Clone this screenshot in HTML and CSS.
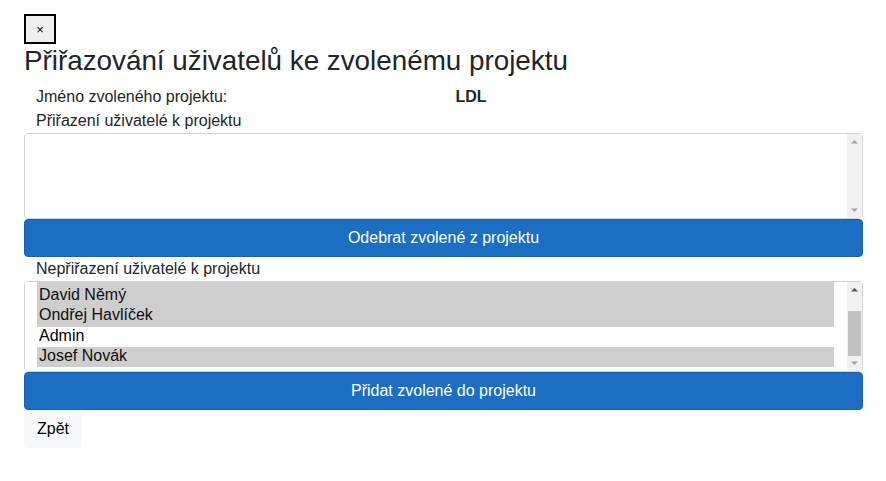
FILE: index.html
```html
<!DOCTYPE html>
<html lang="cs">
<head>
<meta charset="utf-8">
<title>Přiřazování uživatelů</title>
<link rel="stylesheet" href="styles.css">
</head>
<body>
<main class="page">
  <button class="close-btn" type="button">×</button>
  <h3 class="title">Přiřazování uživatelů ke zvolenému projektu</h3>
  <div class="row">
    <div class="col">Jméno zvoleného projektu:</div>
    <div class="col col-bold">LDL</div>
  </div>
  <div class="row">
    <div class="col">Přiřazení uživatelé k projektu</div>
  </div>
  <div class="listbox-wrap">
    <select class="listbox listbox-assigned" multiple></select>
    <div class="scrollbar" aria-hidden="true">
      <div class="sb-btn"><svg width="15" height="15" viewBox="0 0 15 15"><polygon class="arrow-off" points="4,9.5 11,9.5 7.5,6"/></svg></div>
      <div class="sb-track"></div>
      <div class="sb-btn"><svg width="15" height="15" viewBox="0 0 15 15"><polygon class="arrow-off" points="4,5.5 11,5.5 7.5,9"/></svg></div>
    </div>
  </div>
  <button class="btn btn-primary" type="button">Odebrat zvolené z projektu</button>
  <div class="row">
    <div class="col">Nepřiřazení uživatelé k projektu</div>
  </div>
  <div class="listbox-wrap">
    <select id="unassigned" class="listbox listbox-unassigned" multiple>
      <option selected>Andrea Nováková</option>
      <option selected>David Němý</option>
      <option selected>Ondřej Havlíček</option>
      <option>Admin</option>
      <option selected>Josef Novák</option>
    </select>
    <div class="scrollbar" aria-hidden="true">
      <div class="sb-btn"><svg width="15" height="15" viewBox="0 0 15 15"><polygon class="arrow-on" points="4,9.5 11,9.5 7.5,6"/></svg></div>
      <div class="sb-track sb-track-end"><div class="sb-thumb"></div></div>
      <div class="sb-btn"><svg width="15" height="15" viewBox="0 0 15 15"><polygon class="arrow-off" points="4,5.5 11,5.5 7.5,9"/></svg></div>
    </div>
  </div>
  <button class="btn btn-primary" type="button">Přidat zvolené do projektu</button>
  <div class="actions">
    <button class="btn btn-light" type="button">Zpět</button>
  </div>
</main>
<script src="script.js"></script>
</body>
</html>
```

FILE: styles.css
```css
html, body {
  margin: 0;
  padding: 0;
  background: #fff;
}
body {
  font-family: "Liberation Sans", Arial, Helvetica, sans-serif;
  font-size: 16px;
  line-height: 1.5;
  color: #212529;
}
.page {
  display: flex;
  flex-direction: column;
  align-items: stretch;
  padding: 14px 23px 0 24px;
}
.close-btn {
  align-self: flex-start;
  width: 32px;
  height: 30px;
  padding: 0;
  margin: 0;
  border: 2px solid #000;
  background: #efefef;
  font-family: "Liberation Sans", Arial, sans-serif;
  font-size: 13px;
  line-height: 1;
  color: #000;
}
.title {
  margin: 0 0 7px 0;
  font-size: 27.8px;
  font-weight: 400;
  line-height: 34px;
  color: #212529;
}
.row {
  display: flex;
}
.col {
  flex: 0 0 50%;
  box-sizing: border-box;
  padding: 0 12px;
}
.col-bold {
  font-weight: 700;
}
.listbox-wrap {
  position: relative;
}
.listbox {
  display: block;
  box-sizing: border-box;
  width: 100%;
  margin: 0;
  padding: 6px 28px 6px 12px;
  border: 1px solid #ced4da;
  border-radius: 4px;
  background: #fff;
  font-family: "Liberation Sans", Arial, sans-serif;
  font-size: 16px;
  color: #000;
  outline: none;
  scrollbar-width: none;
}
.listbox-assigned {
  height: 86px;
}
.listbox-unassigned {
  height: 91px;
}
.scrollbar {
  position: absolute;
  top: 1px;
  right: 1px;
  bottom: 1px;
  width: 15px;
  display: flex;
  flex-direction: column;
  background: #f1f1f1;
}
.sb-btn {
  flex: 0 0 15px;
  height: 15px;
}
.sb-btn svg {
  display: block;
}
.arrow-off {
  fill: #a3a3a3;
}
.arrow-on {
  fill: #505050;
}
.sb-track {
  flex: 1 1 auto;
  display: flex;
  flex-direction: column;
  padding: 0 1px;
}
.sb-track-end {
  justify-content: flex-end;
}
.sb-thumb {
  height: 45px;
  background: #c1c1c1;
}
.btn {
  box-sizing: border-box;
  margin: 0;
  padding: 6px 12px;
  border: 1px solid transparent;
  border-radius: 4px;
  font-family: "Liberation Sans", Arial, sans-serif;
  font-size: 16px;
  line-height: 1.5;
  cursor: pointer;
}
.btn-primary {
  width: 100%;
  color: #fff;
  background: #1b6ec2;
  border-color: #1861ac;
}
.actions {
  display: flex;
}
.btn-light {
  color: #000;
  background: #f8f9fa;
  border-color: #f8f9fa;
}
```

FILE: script.js
```js
window.addEventListener('load', function () {
  var list = document.getElementById('unassigned');
  list.scrollTop = list.scrollHeight - list.clientHeight - 2;
});
```
